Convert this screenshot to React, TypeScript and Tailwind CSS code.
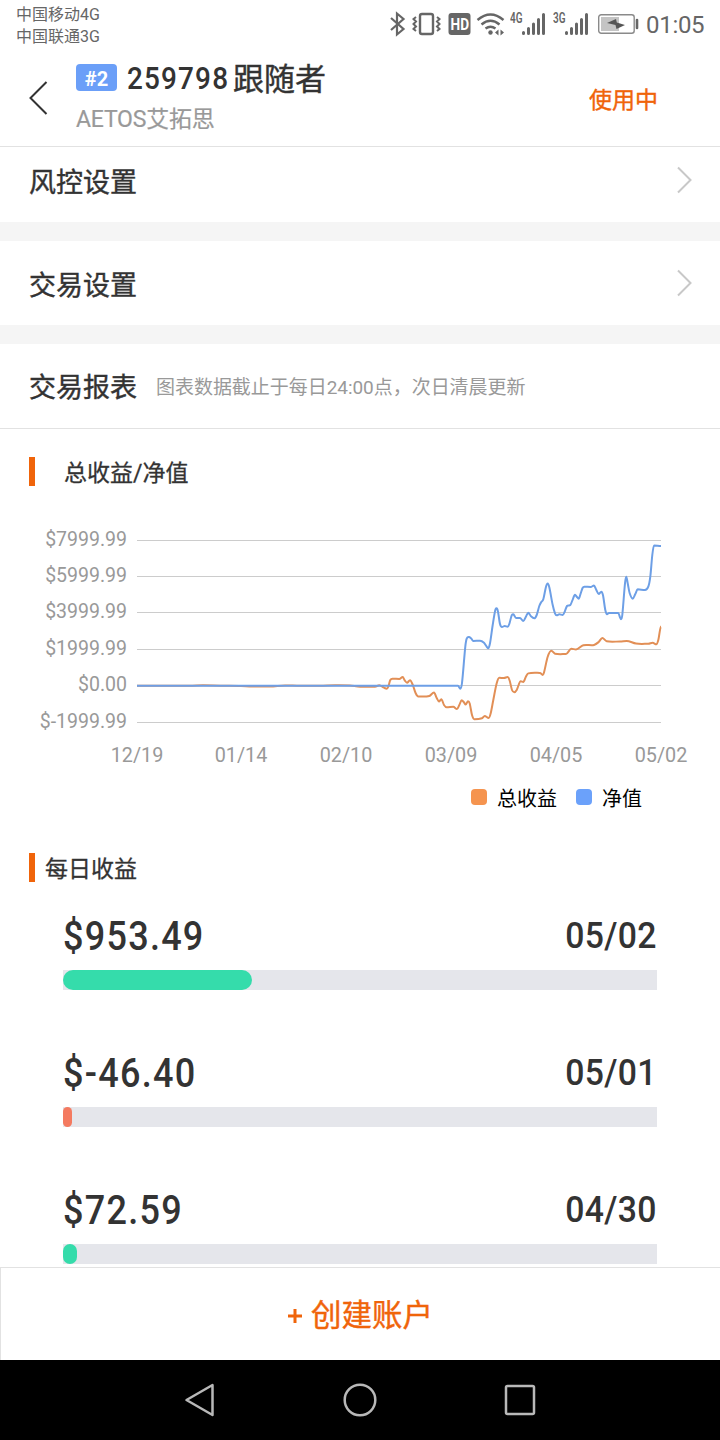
import React from 'react';

type Point = [number, number];

interface DailyProfit {
    date: string;
    amount: string;
    width: number;
    positive: boolean;
}

const dailyProfits: DailyProfit[] = [
    { date: '05/02', amount: '$953.49', width: 189, positive: true },
    { date: '05/01', amount: '$-46.40', width: 9, positive: false },
    { date: '04/30', amount: '$72.59', width: 14, positive: true },
];

const yTicks = [
    { label: '$7999.99', y: 540.5 },
    { label: '$5999.99', y: 576.5 },
    { label: '$3999.99', y: 612.5 },
    { label: '$1999.99', y: 649.5 },
    { label: '$0.00', y: 685.5 },
    { label: '$-1999.99', y: 722.5 },
];

const xTicks = [
    { label: '12/19', x: 137 },
    { label: '01/14', x: 241 },
    { label: '02/10', x: 346 },
    { label: '03/09', x: 451 },
    { label: '04/05', x: 556 },
    { label: '05/02', x: 661 },
];

const netValue: Point[] = [
    [137, 685.7], [458, 685.7], [460.3, 688.7], [462, 683], [465.3, 646.7], [466.7, 638.7], [469, 637],
    [471, 638.3], [473.3, 641], [480, 640.7], [484, 642.7], [486.7, 646.7], [488.3, 648.3], [490, 643.3],
    [492.7, 625], [495.3, 610], [496.7, 608.3], [498, 611.7], [500, 624], [502, 627], [504.7, 626],
    [507.7, 626.7], [509.3, 624], [511.7, 615.3], [513.3, 614.3], [516, 618], [520, 618], [523.3, 621],
    [526, 616.5], [528.3, 612.7], [531, 616.3], [534.3, 618.3], [536.7, 615], [539.3, 606], [541.3, 602],
    [543.3, 599.3], [546, 586.7], [547.7, 583.5], [549.3, 587.3], [552.7, 605], [555, 613.3], [556.7, 615.3],
    [559.3, 614.3], [562.7, 615], [564.7, 611.7], [567, 606], [570.3, 605], [572.3, 600.7], [575, 594.7],
    [576.7, 596.7], [578.7, 598.7], [580.7, 593.3], [582.7, 587.7], [584.3, 586.7], [590.7, 587], [594, 585.5],
    [596, 589.3], [598.7, 594], [601.3, 591.7], [603, 595.3], [605.3, 610], [607, 614.3], [609, 613],
    [618.3, 613], [620, 617.3], [621, 619.3], [622.3, 615], [625, 583.3], [626.3, 576.7], [627.7, 583.3],
    [629.7, 593.3], [632.7, 598.7], [635.3, 594], [637.7, 589.3], [645, 590], [648.3, 586.7], [650.3, 576.7],
    [652.3, 555], [654, 545.5], [661, 546],
];

const totalProfit: Point[] = [
    [137, 685.7], [190, 685.7], [203, 685.3], [220, 685.7], [241, 686], [252, 686.5], [270, 686.5], [285, 685.4],
    [300, 685.8], [320, 685.8], [335, 685.3], [350, 685.5], [360, 686.7], [375, 686.7], [379.3, 685.3],
    [384, 687.7], [386.7, 688.7], [388.3, 686.7], [390.3, 680], [392.7, 678.7], [399.3, 679], [402.7, 677],
    [404.7, 680.3], [407, 682.7], [410, 680.3], [412.7, 684.7], [415.7, 693.3], [418.3, 696.5], [429.3, 696],
    [434, 692.5], [436.7, 698], [439, 701.5], [441.3, 699.2], [444, 705], [446.7, 707.3], [453.3, 706.8],
    [457, 709], [459.3, 705], [461.7, 700.3], [463.7, 702], [465.7, 704.5], [468, 701.3], [469.7, 703.5],
    [472, 715], [474.3, 719.2], [482, 718.3], [484.7, 716], [488.7, 718], [490.7, 713.3], [493.3, 700],
    [496.7, 683.3], [499.3, 677.8], [504, 678], [507.7, 677], [509.7, 680.7], [512, 690], [514.3, 692.3],
    [516.7, 690], [520.7, 681.2], [523.3, 682], [526, 676.5], [528.3, 673.4], [540, 672.9], [542.7, 675],
    [544, 672.5], [547.7, 656.7], [551.3, 650.7], [555, 653.7], [566, 654], [571.3, 648.7], [576, 649.6],
    [583.3, 645.2], [594, 645], [598.7, 642], [602.3, 638], [606.7, 641.3], [620, 641.5], [626.7, 640.9],
    [636, 643.6], [648.3, 643.8], [652.7, 642.8], [656.3, 644.3], [658.3, 640], [661, 626.5],
];

// Horizontal control points keep flat runs flat
const buildPath = (points: Point[]) =>
    points.reduce((path, [x, y], i) => {
        if (i === 0) return `M${x} ${y}`;
        const prev = points[i - 1];
        const before = points[Math.max(i - 2, 0)];
        const next = points[Math.min(i + 1, points.length - 1)];
        const slope = (a: Point, b: Point, c: Point) => {
            if ((b[1] - a[1]) * (c[1] - b[1]) <= 0) return 0;
            return (c[1] - a[1]) / (c[0] - a[0]);
        };
        const dx = (x - prev[0]) / 3;
        const y1 = prev[1] + slope(before, prev, [x, y]) * dx;
        const y2 = y - slope(prev, [x, y], next) * dx;
        return `${path}C${prev[0] + dx} ${y1} ${x - dx} ${y2} ${x} ${y}`;
    }, '');

const SignalIcon: React.FC<{ network: string }> = ({ network }) => (
    <svg width="37" height="26" viewBox="0 0 37 26" className="shrink-0">
        <text x="0" y="11.500" fontSize="14" fontWeight="600" fill="#666" textLength="12.500" lengthAdjust="spacingAndGlyphs">{network}</text>
        <path d="M13.500 21.500v1M18.500 17.500v5M23.500 13v9.500M28.500 8.500v14M33.500 3.500v19" stroke="#666" strokeWidth="3" strokeLinecap="round" />
    </svg>
);

const StatusBar = () => (
    <div className="flex h-12 justify-between text-[#666]">
        <div className="pl-4 pt-[3.500px] text-[16px] leading-[22px]">
            <div>中国移动4G</div>
            <div>中国联通3G</div>
        </div>
        <div className="flex items-center pr-[15px]">
            <svg width="119" height="26" viewBox="390 11 119 26" fill="none" stroke="#666" strokeWidth="2">
                <path d="M391 18l12.500 11-6.500 5.500V13.500l6.500 5.500L391 30" strokeWidth="2.200" />
                <rect x="420" y="14" width="13" height="20" rx="2" strokeWidth="2.400" />
                <path d="M416 17l-2.500 2 2.500 2.500-2.500 2.500 2.500 2.500-2.500 2.500 2.500 2M437 17l2.500 2-2.500 2.500 2.500 2.500-2.500 2.500 2.500 2.500-2.500 2" />
                <rect x="448.500" y="13" width="22" height="22" rx="3" fill="#666" stroke="none" />
                <text x="450.500" y="29.500" fontSize="16" fontWeight="700" fill="#fff" stroke="none" textLength="18.500" lengthAdjust="spacingAndGlyphs">HD</text>
                <path d="M477.500 20q13-11 26 0M481.500 24.500q9-7.500 18 0M485.500 28.500q5-3.500 10 0" strokeWidth="2.400" />
                <circle cx="490.500" cy="32.500" r="2.200" fill="#666" stroke="none" />
                <path d="M498.500 29.500v6l-3.500-3zM500.500 29.500v6l3.500-3z" fill="#666" stroke="none" />
            </svg>
            <span className="ml-[1px] flex gap-[6px]">
                <SignalIcon network="4G" />
                <SignalIcon network="3G" />
            </span>
            <svg width="41" height="20" viewBox="0 0 41 20" className="ml-2">
                <rect x="0.700" y="0.700" width="35.500" height="18.500" rx="2.500" fill="none" stroke="#8a8a8a" strokeWidth="1.400" />
                <rect x="3" y="3" width="18" height="14" fill="#c4c4c4" />
                <path d="M9 9l9-4 .8 3.500 8.200 2.500-8.500 4-1-4z" fill="#555" />
                <path d="M39 6v8" stroke="#666" strokeWidth="2.600" strokeLinecap="round" />
            </svg>
            <span className="ml-[7px] mt-[2px] w-[59px] whitespace-nowrap text-[24px] tracking-[-0.3px]">01:05</span>
        </div>
    </div>
);

const Header = () => (
    <div className="flex h-[99px] items-start border-b border-[#e2e2e2]">
        <svg width="20" height="34" viewBox="0 0 20 34" fill="none" stroke="#333" strokeWidth="2" className="ml-7 mt-[33px]">
            <path d="M18.500 1L2.500 17l16 16" />
        </svg>
        <div className="ml-7 flex-1">
            <div className="mt-[11px] flex h-10 items-center">
                <span className="mb-[4px] flex h-[27px] w-[41px] items-center justify-center rounded-[4px] bg-[#6b9ff8] pt-[3px] text-[20px] font-bold text-white">#2</span>
                <span className="ml-[10px] w-[106px] origin-left scale-x-90 text-[31px] font-medium tracking-[1.3px] text-[#333]">259798</span>
                <span className="mt-[2px] text-[31px] text-[#333] [-webkit-text-stroke:0.4px]">跟随者</span>
            </div>
            <div className="mt-[4px] text-[23px] leading-[34px] tracking-[-0.2px] text-[#999] [-webkit-text-stroke:0.2px]">AETOS艾拓思</div>
        </div>
        <span className="mr-[62px] mt-[36px] text-[23px] leading-[34px] text-[#f0640a] [-webkit-text-stroke:0.4px]">使用中</span>
    </div>
);

const SettingRow: React.FC<{ title: string; className: string }> = ({ title, className }) => (
    <div className={`flex items-center justify-between border-[#f5f5f5] pl-[29px] pr-[27px] ${className}`}>
        <span className="mt-[6px] text-[27px] leading-[40px] text-[#333] [-webkit-text-stroke:0.4px]">{title}</span>
        <svg width="17" height="28" viewBox="0 0 17 28" fill="none" stroke="#c8c8c8" strokeWidth="2">
            <path d="M2 1.500L14.500 14 2 26.500" />
        </svg>
    </div>
);

const ProfitChart = () => (
    <svg width="720" height="270" viewBox="0 510 720 270" className="block">
        {yTicks.map((tick) => (
            <g key={tick.label}>
                <path d={`M137 ${tick.y}H661`} stroke="#ccc" />
                <text x="127" y={tick.y + 5.5} textAnchor="end" fontSize="19.500" fill="#999">{tick.label}</text>
            </g>
        ))}
        {xTicks.map((tick) => (
            <text key={tick.label} x={tick.x} y="762" textAnchor="middle" fontSize="19.800" fill="#999">{tick.label}</text>
        ))}
        <g fill="none" strokeWidth="2" strokeLinejoin="round">
            <path d={buildPath(totalProfit)} stroke="#e28f56" />
            <path d={buildPath(netValue)} stroke="#6d9fe6" />
        </g>
    </svg>
);

const DailyRow: React.FC<{ item: DailyProfit }> = ({ item }) => (
    <div className="h-[137px] shrink-0 px-[63px]">
        <div className="flex h-[70px] items-center justify-between pt-[3px] font-medium text-[#333]">
            <span className="origin-left scale-x-90 text-[40px] tracking-[1.4px]">{item.amount}</span>
            <span className="mb-[2px] origin-right scale-x-90 text-[37.5px] tracking-[0.4px]">{item.date}</span>
        </div>
        <div className="h-5 bg-[#e5e6eb]">
            <div
                className={`h-5 rounded-full ${item.positive ? 'bg-[#35dcab]' : 'bg-[#f47a60]'}`}
                style={{ width: item.width }}
            />
        </div>
    </div>
);

export default function App() {
    return (
        <div className="flex h-[1440px] w-[720px] flex-col overflow-hidden bg-white font-[Roboto,'Noto_Sans_CJK_SC',sans-serif]">
            <StatusBar />
            <Header />

            <div className="flex min-h-0 flex-1 flex-col overflow-hidden">
                <SettingRow title="风控设置" className="h-[94px] shrink-0 border-b-[19px] pb-[9px]" />
                <SettingRow title="交易设置" className="h-[103px] shrink-0 border-b-[19px]" />

                <div className="flex h-[85px] shrink-0 items-center border-b border-[#e2e2e2] pl-[29px] pt-[5px]">
                    <span className="text-[27px] text-[#333] [-webkit-text-stroke:0.4px]">交易报表</span>
                    <span className="ml-[19px] text-[19px] tracking-[-0.04px] text-[#999]">图表数据截止于每日24:00点，次日清晨更新</span>
                </div>

                {/* Profit / net value chart */}
                <div className="flex h-[81px] shrink-0 items-start pl-[29px] pt-7">
                    <span className="h-[29px] w-[6px] bg-[#f0640a]" />
                    <span className="ml-[29px] mt-[2px] text-[23px] leading-[30px] text-[#333] [-webkit-text-stroke:0.3px]">总收益/净值</span>
                </div>
                <div className="shrink-0">
                    <ProfitChart />
                </div>
                <div className="flex h-[73px] shrink-0 items-start justify-end pr-[78px] pt-[4px] text-[20px] leading-[30px] text-black">
                    <span className="mr-[10px] mt-[5px] size-4 rounded-[4px] bg-[#f5944f]" />
                    总收益
                    <span className="ml-[19px] mr-[10px] mt-[5px] size-4 rounded-[4px] bg-[#6ba1fa]" />
                    净值
                </div>

                {/* Daily profit */}
                <div className="flex h-[47px] shrink-0 items-start pl-[29px]">
                    <span className="h-[29px] w-[6px] bg-[#f0640a]" />
                    <span className="ml-[10px] mt-[2px] text-[23px] leading-[30px] text-[#333] [-webkit-text-stroke:0.3px]">每日收益</span>
                </div>
                {dailyProfits.map((item) => (
                    <DailyRow key={item.date} item={item} />
                ))}
            </div>

            <div className="flex h-[93px] shrink-0 items-center justify-center border-l border-t border-[#e2e2e2] pt-[3px] text-[30.5px] text-[#f0640a] [-webkit-text-stroke:0.4px]">
                <svg width="14" height="14" viewBox="0 0 14 14" stroke="currentColor" strokeWidth="3" className="mr-[9px]">
                    <path d="M0 7h14M7 0v14" />
                </svg>
                创建账户
            </div>

            <div className="flex h-20 shrink-0 items-center justify-center bg-black">
                <svg width="360" height="40" viewBox="180 1380 360 40" fill="none" stroke="#b8b8b8" strokeWidth="2.500" strokeLinejoin="round">
                    <path d="M212.500 1385v30l-26-15z" />
                    <circle cx="360" cy="1400" r="15.300" />
                    <rect x="506" y="1386" width="28" height="28" rx="1.500" />
                </svg>
            </div>
        </div>
    );
}
